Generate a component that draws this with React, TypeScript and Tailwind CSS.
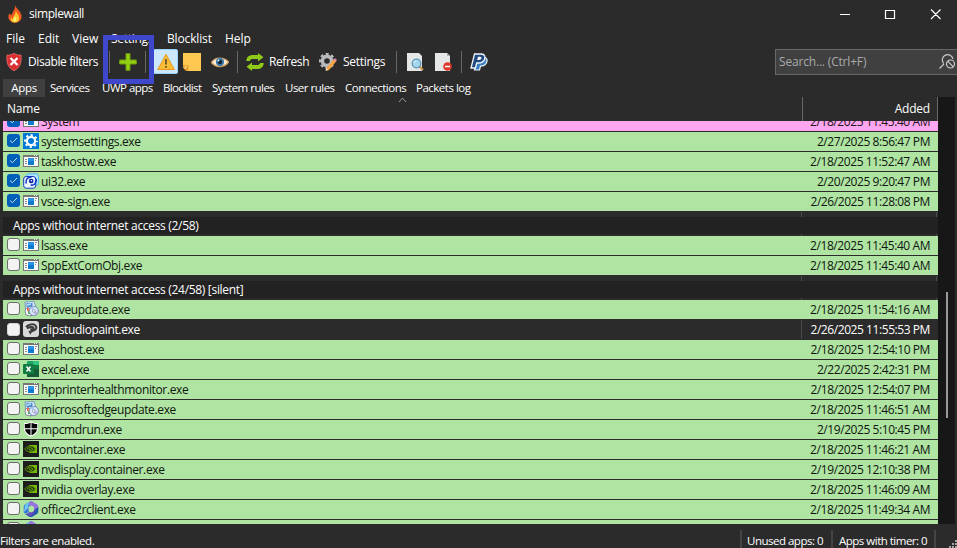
import React from 'react';

type IconKind = 'window' | 'gear' | 'ui' | 'installer' | 'clip' | 'excel' | 'shield' | 'nvidia' | 'office';
type Row = { name: string; date: string; icon: IconKind; checked?: boolean; tone?: 'pink' | 'plain' };

const activeRows: Row[] = [
  { name: 'System', date: '2/18/2025 11:45:40 AM', icon: 'window', checked: true, tone: 'pink' },
  { name: 'systemsettings.exe', date: '2/27/2025 8:56:47 PM', icon: 'gear', checked: true },
  { name: 'taskhostw.exe', date: '2/18/2025 11:52:47 AM', icon: 'window', checked: true },
  { name: 'ui32.exe', date: '2/20/2025 9:20:47 PM', icon: 'ui', checked: true },
  { name: 'vsce-sign.exe', date: '2/26/2025 11:28:08 PM', icon: 'window', checked: true },
];
const blockedRows: Row[] = [
  { name: 'lsass.exe', date: '2/18/2025 11:45:40 AM', icon: 'window' },
  { name: 'SppExtComObj.exe', date: '2/18/2025 11:45:40 AM', icon: 'window' },
];
const silentRows: Row[] = [
  { name: 'braveupdate.exe', date: '2/18/2025 11:54:16 AM', icon: 'installer' },
  { name: 'clipstudiopaint.exe', date: '2/26/2025 11:55:53 PM', icon: 'clip', tone: 'plain' },
  { name: 'dashost.exe', date: '2/18/2025 12:54:10 PM', icon: 'window' },
  { name: 'excel.exe', date: '2/22/2025 2:42:31 PM', icon: 'excel' },
  { name: 'hpprinterhealthmonitor.exe', date: '2/18/2025 12:54:07 PM', icon: 'window' },
  { name: 'microsoftedgeupdate.exe', date: '2/18/2025 11:46:51 AM', icon: 'installer' },
  { name: 'mpcmdrun.exe', date: '2/19/2025 5:10:45 PM', icon: 'shield' },
  { name: 'nvcontainer.exe', date: '2/18/2025 11:46:21 AM', icon: 'nvidia' },
  { name: 'nvdisplay.container.exe', date: '2/19/2025 12:10:38 PM', icon: 'nvidia' },
  { name: 'nvidia overlay.exe', date: '2/18/2025 11:46:09 AM', icon: 'nvidia' },
  { name: 'officec2rclient.exe', date: '2/18/2025 11:49:34 AM', icon: 'office' },
  { name: '', date: '', icon: 'office' },
];

function AppIcon({ kind }: { kind: IconKind }) {
  return (
    <svg width="16" height="16" viewBox="0 0 16 16" className="shrink-0">
      {kind === 'window' && (
        <g shapeRendering="crispEdges">
          <path fill="#777" d="M0 2h16v12H0z" />
          <path fill="#fafafa" d="M1 4h14v9H1z" />
          <path fill="#eee" d="M11 2h1v1h-1zM13 2h1v1h-1z" />
          <path fill="#0c7bd0" d="M5 5h6v7H5z" />
          <path fill="#2a93e3" d="M5 5h6v3H5z" />
          <path stroke="#8b8b8b" d="M2 6.500h2M2 8.500h2M2 10.500h2M12 5.500h2M12 7.500h1" />
        </g>
      )}
      {kind === 'gear' && (
        <>
          <path fill="#0078d7" d="M0 0h16v16H0z" />
          <circle cx="8" cy="8" r="4.100" fill="none" stroke="#fff" strokeWidth="2.200" />
          <circle cx="8" cy="8" r="5.900" fill="none" stroke="#fff" strokeWidth="2" strokeDasharray="2.200 2.434" strokeDashoffset="1.100" />
        </>
      )}
      {kind === 'ui' && (
        <>
          <rect x="3.500" y="0.800" width="12" height="11.500" rx="2.500" fill="#b5e6ff" stroke="#53b8ed" />
          <rect x="0.700" y="3.500" width="12" height="11.700" rx="2.500" fill="#e8f5ff" stroke="#1637b8" />
          <path d="M3 10.500C2.500 6 5 3.800 8.500 4.200M13.200 5.800c.5 4.200-2 6.800-5.500 6.300" fill="none" stroke="#1738c8" strokeWidth="1.600" />
          <circle cx="8.200" cy="8" r="2.300" fill="#0b1e96" />
          <circle cx="8.400" cy="7.800" r=".8" fill="#fff" />
        </>
      )}
      {kind === 'installer' && (
        <>
          <path d="M2 1l9-.5 2 6-4 8-6-1z" fill="#dcecf8" stroke="#6384b8" strokeWidth=".8" />
          <path d="M3.500 2h6v4h-6z" fill="#4e89cf" />
          <path d="M4 3l4-1v2L4 5z" fill="#a3dcf7" />
          <path d="M2 9l3-3 4 4-1 5-5-1z" fill="#f3f5fa" stroke="#668" strokeWidth=".7" />
          <path d="M4 7h1.800v3H4z" fill="#ef6542" />
          <path d="M5 10h2v3H5z" fill="#54b344" />
          <circle cx="10.800" cy="10" r="4.600" fill="#d7e6fa" stroke="#6c7caf" strokeWidth=".8" />
          <path d="M10.800 10l-3-3a4 4 0 0 1 3-1.400z" fill="#a5c8f3" />
          <path d="M10.800 10l4 1a4 4 0 0 1-3 3z" fill="#bcaadf" />
          <circle cx="10.800" cy="10" r="1.400" fill="#fff" stroke="#7785ac" strokeWidth=".7" />
        </>
      )}
      {kind === 'clip' && (
        <>
          <rect width="16" height="16" rx="3" fill="#d9d9d9" />
          <path d="M3.200 6.200C4.500 3.400 11 2 13 5.200c1.300 2.700-2 5-5.500 5.300M4 7.500c2-1.700 6.500-2.200 6.500-.5 0 1.200-2 1.500-3.200 1.300" fill="none" stroke="#3d3d3d" strokeWidth="2" />
          <path d="M5.500 10l4.500-.7-2.800 4.500z" fill="#3d3d3d" />
        </>
      )}
      {kind === 'excel' && (
        <>
          <rect x="4" width="12" height="15.500" rx=".8" fill="#21a366" />
          <path fill="#33c481" d="M10 0h6v4h-6z" />
          <path fill="#107c41" d="M4 8h6v4H4zM10 4h6v4h-6z" />
          <path fill="#185c37" d="M4 12h12v4H4zM10 8h6v7h-6z" />
          <rect y="3" width="11" height="10" rx=".7" fill="#107c41" />
          <path d="M3.500 5.500l4 5M7.500 5.500l-4 5" stroke="#fff" strokeWidth="1.500" />
        </>
      )}
      {kind === 'shield' && (
        <>
          <path d="M8 .2c2 1.600 4.500 2 7 1.800v5c0 4-2.500 7-7 8.800C3.500 14 1 11 1 7V2c2.500.2 5-.2 7-1.800z" fill="#fff" />
          <path d="M7.500 1.800v5.500H1.800V3c2.200 0 4.100-.3 5.700-1.200zM8.500 1.800C10.100 2.700 12 3 14.200 3v4.300H8.500zM2 8.300h5.500v6C4.300 13 2.500 11 2 8.300zM8.500 8.300H14c-.5 2.700-2.300 4.700-5.500 6z" fill="#050505" />
        </>
      )}
      {kind === 'nvidia' && (
        <>
          <path fill="#1d1d1d" d="M0 0h16v16H0z" />
          <path fill="#76b900" d="M6 4h8v8H6.500z" />
          <path d="M1.800 8C3.500 5.500 5.500 4.800 7.800 5 10.300 5.400 11.800 7 12.500 8c-1.200 1.800-3 2.800-5.200 2.800C4.700 10.800 2.800 9.800 1.800 8z" fill="#22310e" stroke="#5e920c" strokeWidth=".9" />
          <path d="M4 8c1-1.500 4-2 6 .2-1.300 1.300-2.700 1.500-4 .2" fill="none" stroke="#76b900" strokeWidth=".9" />
        </>
      )}
      {kind === 'office' && (
        <>
          <path d="M7 .6L2 3.500C.8 4.300.7 5 .7 6.500v4c0 2 2 2.500 3.800 1.600L6 11V6l4-2.500C10.500 1 8.800-.2 7 .6z" fill="#3979d8" />
          <path d="M6 1l3-.7 5 3c1 .6 1.300 1.500 1.300 3v3L11 11V7L6 4z" fill="#9775e0" />
          <path d="M15.300 6v4.500c0 1.300-.5 2-1.500 2.600l-4 2.300c-1.600.8-2.600.6-4 0L2 13c3 .2 4-1.500 6-2.500l4-2.300z" fill="#2757a8" />
          <path d="M2 4l4-3-1 6-4 4z" fill="#71c7ef" />
          <path d="M6 12l7-3-5 6-5-1.500z" fill="#7048c7" />
          <path d="M5.500 6l2.700-1.600L11 6v4l-2.800 1.500L5.500 10z" fill="#afe4a2" />
        </>
      )}
    </svg>
  );
}

function Checkbox({ checked, plain }: { checked?: boolean; plain?: boolean }) {
  if (checked) {
    return (
      <span className="mt-[2px] flex h-[13px] w-[13px] items-center justify-center self-start rounded-[3px] bg-[#005fb8]">
        <svg width="9" height="7" viewBox="0 0 9 7"><path d="M1 3.500l2.300 2.200L8 1" fill="none" stroke="#c9e2f5" /></svg>
      </span>
    );
  }
  return (
    <span
      className={`h-[13px] w-[13px] self-start rounded-[3px] border bg-[#f3f3f3] ${plain ? 'mt-[3px] border-[#d5d5d5]' : 'mt-[2px] border-[#6d6d6d]'}`}
    />
  );
}

function AppRow({ row }: { row: Row }) {
  const tone =
    row.tone === 'pink' ? 'bg-[#ffa6f0] text-[#241420]' : row.tone === 'plain' ? 'bg-[#2b2b2b] text-white' : 'bg-[#afe4a2] text-[#101510]';
  return (
    <div className={`flex h-5 shrink-0 border-b border-[#2b2b2b] pl-1 ${tone}`}>
      <Checkbox checked={row.checked} plain={row.tone === 'plain'} />
      <span className="ml-[3px] mt-[1px] w-[18px]"><AppIcon kind={row.icon} /></span>
      <span className="flex-1 whitespace-nowrap leading-[19px] tracking-[-0.36px]">{row.name}</span>
      <span className={`w-[137px] whitespace-nowrap border-l pr-[8px] text-right leading-[19px] tracking-[-0.43px] ${row.tone === 'plain' ? 'border-[#454b50]' : 'border-transparent'}`}>{row.date}</span>
    </div>
  );
}

function GroupHeader({ label }: { label: string }) {
  return (
    <div className="h-[24px] shrink-0">
      <div className="ml-auto mr-px h-[5px] w-[136px] border-x border-[#454b50]" />
      <div className="h-[17px] bg-[#222] pl-[10px] leading-[17px] tracking-[-0.31px] text-white">{label}</div>
      <div className="ml-auto mr-px h-[2px] w-[136px] border-x border-[#454b50]" />
    </div>
  );
}

const Sep = ({ className = '' }: { className?: string }) => <span className={`h-[22px] w-px shrink-0 bg-[#686868] ${className}`} />;

type ToolKind = 'filters' | 'plus' | 'warn' | 'note' | 'eye' | 'refresh' | 'settings' | 'find' | 'remove' | 'paypal';

function ToolbarIcon({ kind, className = '' }: { kind: ToolKind; className?: string }) {
  return (
    <svg width="18" height="18" viewBox="0 0 18 18" className={`shrink-0 ${className}`}>
      {kind === 'filters' && (
        <>
          <path d="M9 .3c2.200 1.500 4.500 2 7 1.700.7 7-.5 12.700-7 15.700C2.500 14.700 1.300 9 2 2c2.500.3 4.800-.2 7-1.700z" fill="#d92f30" stroke="#f07a72" strokeWidth=".7" />
          <path d="M5.500 5l7 7M12.500 5l-7 7" stroke="#fff" strokeWidth="2.300" />
        </>
      )}
      {kind === 'plus' && <path d="M7 .7h4v6.300h6.300v4H11v6.300H7V11H.7V7H7z" fill="#91cf11" stroke="#6e9f0c" />}
      {kind === 'warn' && (
        <>
          <path d="M9 1.300L17.300 16.500H.7z" fill="#fbbd35" stroke="#e69a20" strokeLinejoin="round" />
          <path d="M9 6v5.500M9 13v1.700" stroke="#5d502f" strokeWidth="1.700" />
        </>
      )}
      {kind === 'note' && (
        <>
          <path d="M0 0h18v18H0z" fill="#ffc851" />
          <path d="M0 12l5.500.5L5 18H0z" fill="#e29c29" />
          <path d="M1.300 13.200l3 .3-2.500 3z" fill="#ffd98a" />
          <path d="M0 15l3 3H0z" fill="#2b2b2b" />
        </>
      )}
      {kind === 'eye' && (
        <>
          <path d="M.5 9.500C4 4 12.500 3.500 17.500 9 13.500 14.700 4.500 15 .5 9.500z" fill="#fff0dc" stroke="#d8a365" strokeWidth="1.400" />
          <circle cx="9" cy="9" r="4.200" fill="#417caa" />
          <circle cx="9" cy="9" r="2.200" fill="#102333" />
          <circle cx="7.500" cy="7.500" r="1" fill="#dcefff" />
        </>
      )}
      {kind === 'refresh' && (
        <g fill="#8fca16">
          <path d="M.3 8C.5 4 3 2 7 2h5V0l5.500 4.200L12 8.500V6H7C5 6 4.600 6.500 4 8z" />
          <path d="M17.700 10c-.2 4-2.700 6-6.700 6H6v2L.5 13.800 6 9.500V12h5c2 0 2.400-.5 3-2z" />
        </g>
      )}
      {kind === 'settings' && (
        <>
          <circle cx="8" cy="8" r="4.600" fill="none" stroke="#b8babe" strokeWidth="3.600" />
          <circle cx="8" cy="8" r="7" fill="none" stroke="#b8babe" strokeWidth="2.200" strokeDasharray="2.900 2.598" strokeDashoffset="1.450" />
          <path d="M7.500 15L15 6l2.500 2-7.500 9-3 .8z" fill="#f5a344" />
          <path d="M14.500 6.500L16 5l2 2-1.500 1.600z" fill="#d986b0" />
          <path d="M6.500 17.700l.7-2.600 2.200 1.900z" fill="#f6ddb4" />
        </>
      )}
      {(kind === 'find' || kind === 'remove') && <path d="M1 0h12l3 3v15H1z" fill="#e5e7e7" />}
      {kind === 'find' && (
        <>
          <path d="M13 13l4 4" stroke="#c98f44" strokeWidth="2.200" />
          <circle cx="10.500" cy="10.500" r="4.300" fill="#a3d6ed" stroke="#5794b7" strokeWidth="1.200" />
          <path d="M8 10c.2-1.500 1.200-2.200 2.500-2.300" stroke="#e8faff" fill="none" />
        </>
      )}
      {kind === 'remove' && (
        <>
          <path d="M13 0v3h3z" fill="#a8adae" />
          <circle cx="13.500" cy="13.500" r="4.300" fill="#e1382e" />
          <path d="M11 13.500h5" stroke="#fff" strokeWidth="1.500" />
        </>
      )}
      {kind === 'paypal' && (
        <>
          <path d="M7.500 4h6c3.500.3 4.200 3 3 5.700-1 2.300-3 3.300-6 3.300l-1 4H4.500z" fill="#397fc0" stroke="#eef5fb" strokeWidth="1.200" />
          <path d="M4.500 1h6.800c3.600.2 4.200 2.700 3.200 5.500-1 2.500-3 3.500-6.200 3.500H6.700L5.500 15H1z" fill="#214b80" stroke="#f2f6fa" strokeWidth="1.300" />
          <path d="M8 3.800h2c1.500 0 1.600.7 1.200 1.800C10.900 6.700 10.200 7 9 7H7.200z" fill="#fff" />
        </>
      )}
    </svg>
  );
}

export default function App() {
  return (
    <div className="relative flex h-[548px] w-[957px] flex-col overflow-hidden bg-[#2b2b2b] font-['Open_Sans','Noto_Sans',sans-serif] text-[12px] text-white">
      <header className="flex h-7 shrink-0 items-center pl-[8px]">
        <svg width="14" height="18" viewBox="0 0 14 18">
          <path d="M7 .2c1.500 3.500 4 4.500 5.800 8.200C15.300 14 11.500 17.700 7 17.700S-1.300 13.500 1.200 8.500c1 .8 1.500 1.200 2 2C4.500 7 7.600 4 7 .2z" fill="#f15a20" />
          <path d="M7.700 5.500c.5 2.500 3.500 4.200 3.500 7.500 0 3-2 4.500-4.300 4.500-3 0-4.800-2.200-3.800-5l1.500 1.700C5 11.500 8 9.500 7.700 5.500z" fill="#ffc629" />
          <path d="M7 11c.5 1.500 2 2 1.500 4.200-.4 1.700-3 1.700-3.200-.2C5.200 13.500 7 12.500 7 11z" fill="#fff17c" />
        </svg>
        <span className="ml-[7px] tracking-[-0.4px]">simplewall</span>
        <svg width="104" height="12" viewBox="0 0 104 12" className="ml-auto mr-[14px]" fill="none" stroke="#fff" strokeWidth="1.200">
          <path d="M1 6.500h10M46.500 2.500h9v8h-9zM92 1.500l9.500 9.500M101.500 1.500L92 11" />
        </svg>
      </header>

      <nav className="flex h-[21px] shrink-0 items-center pl-[6px] leading-[21px]">
        <span className="w-8">File</span>
        <span className="w-[34px]">Edit</span>
        <span className="w-[39px]">View</span>
        <span className="w-[56px] tracking-[-0.3px]">Settings</span>
        <span className="w-[58px] tracking-[-0.15px]">Blocklist</span>
        <span>Help</span>
      </nav>

      <div className="flex h-[30px] shrink-0 items-center pb-[5px] pl-[5px]">
        <ToolbarIcon kind="filters" />
        <span className="ml-[5px] w-[81px] whitespace-nowrap tracking-[-0.4px]">Disable filters</span>
        <Sep />
        <span className="flex w-[35px] justify-center"><ToolbarIcon kind="plus" /></span>
        <Sep />
        <span className="ml-[7px] flex h-[25px] w-[25px] items-center justify-center rounded-[2px] border border-[#99d1ff] bg-[#cce8ff]"><ToolbarIcon kind="warn" /></span>
        <ToolbarIcon kind="note" className="ml-[5px]" />
        <ToolbarIcon kind="eye" className="ml-[10px]" />
        <Sep className="ml-[8px]" />
        <ToolbarIcon kind="refresh" className="ml-[8px]" />
        <span className="ml-[5px] w-[50px] tracking-[-0.4px]">Refresh</span>
        <ToolbarIcon kind="settings" />
        <span className="ml-[6px] w-[53px] tracking-[-0.3px]">Settings</span>
        <Sep />
        <ToolbarIcon kind="find" className="ml-[9px]" />
        <ToolbarIcon kind="remove" className="ml-[10px]" />
        <Sep className="ml-[9px]" />
        <ToolbarIcon kind="paypal" className="ml-[8px]" />
        <div className="ml-auto flex h-[26px] w-[182px] items-center border border-r-0 border-[#686868] bg-[#404040] pl-[3px] text-[#aaa]">
          <span className="flex-1 tracking-[-0.18px]">Search... (Ctrl+F)</span>
          <svg width="17" height="18" viewBox="0 0 17 18" fill="none" stroke="#ccc" strokeWidth="1.200" className="mr-px">
            <path d="M.500 15.500l4.500-4.500M4.600 10.500A5.400 5.400 0 1 1 14 6" />
            <circle cx="11.500" cy="11" r="4" />
            <path d="M8.700 8.200l5.600 5.600" />
          </svg>
        </div>
      </div>

      <div className="flex h-[18px] shrink-0 pl-[3px] text-[11.5px] leading-[18px] tracking-[-0.5px]">
        <span className="mr-[5px] w-[42px] bg-[#404040] text-center tracking-[-0.3px]">Apps</span>
        <span className="w-[52px]">Services</span>
        <span className="w-[61px] whitespace-nowrap">UWP apps</span>
        <span className="w-[49px] whitespace-nowrap tracking-[-0.65px]">Blocklist</span>
        <span className="w-[73px] whitespace-nowrap">System rules</span>
        <span className="w-[60px] whitespace-nowrap">User rules</span>
        <span className="w-[71px] whitespace-nowrap">Connections</span>
        <span className="whitespace-nowrap">Packets log</span>
      </div>

      <main className="flex h-[427px] shrink-0 pl-[3px]">
        <section className="flex w-[935px] flex-col overflow-hidden">
          <div className="relative z-10 flex h-[24px] shrink-0 bg-[#2b2b2b] leading-[23px]">
            <span className="flex-1 pl-1 tracking-[-0.2px]">Name</span>
            <span className="w-[136px] border-x border-[#686868] pr-[7px] text-right tracking-[-0.2px]">Added</span>
            <svg width="9" height="6" viewBox="0 0 9 6" className="absolute left-[395px] top-0"><path d="M1 5l3.500-4L8 5" fill="none" stroke="#999" /></svg>
          </div>
          <div className="flex min-h-0 flex-1 flex-col overflow-hidden">
            <div className="-mt-[9px] flex flex-col">
              {activeRows.map((r) => <AppRow key={r.name} row={r} />)}
            </div>
            <GroupHeader label="Apps without internet access (2/58)" />
            {blockedRows.map((r) => <AppRow key={r.name} row={r} />)}
            <GroupHeader label="Apps without internet access (24/58) [silent]" />
            {silentRows.map((r) => <AppRow key={r.name} row={r} />)}
          </div>
        </section>
        <div className="w-[17px] bg-[#171717] pl-[8px] pt-[195px]">
          <div className="h-[126px] w-[2px] bg-[#9a9a9a]" />
        </div>
      </main>

      <footer className="relative flex flex-1 items-end text-[11.5px]">
        <span className="flex-1 leading-[15px] tracking-[-0.4px]">Filters are enabled.</span>
        <span className="h-[18px] w-[91px] whitespace-nowrap border-l-2 border-[#444] pl-[5px] leading-[21px] tracking-[-0.5px]">Unused apps: 0</span>
        <span className="h-[18px] w-[103px] whitespace-nowrap border-l-2 border-[#444] pl-[6px] leading-[21px] tracking-[-0.5px]">Apps with timer: 0</span>
        <span className="h-[18px] w-[23px] border-l-2 border-[#444]" />
        <svg width="9" height="9" viewBox="0 0 9 9" className="absolute bottom-0 right-0" fill="#a5a5a5">
          <path d="M7 1h2v2H7zM4 4h2v2H4zM7 4h2v2H7zM1 7h2v2H1zM4 7h2v2H4zM7 7h2v2H7z" />
        </svg>
      </footer>

      <div className="absolute left-[103px] top-[35px] h-[49px] w-[51px] border-[5px] border-[#3f48cc]" />
    </div>
  );
}
